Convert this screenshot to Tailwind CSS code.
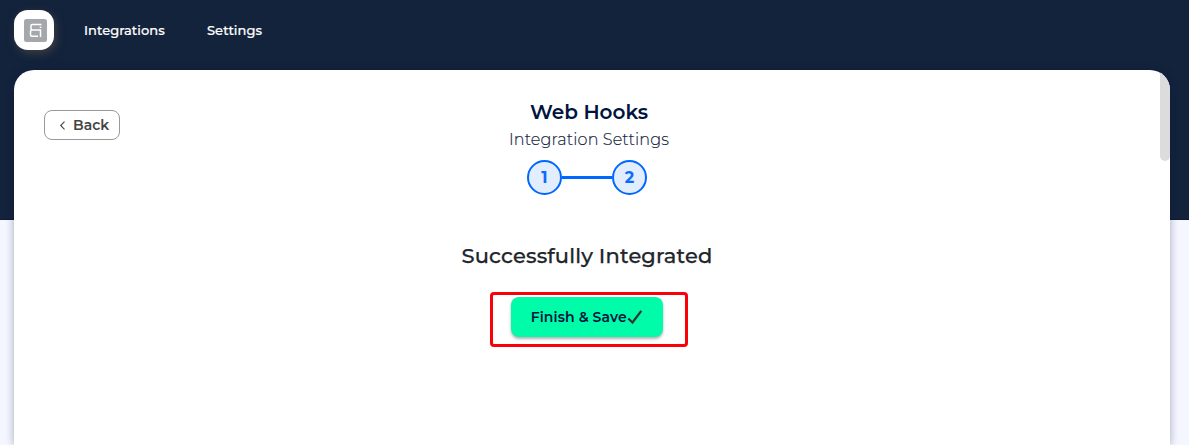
<!DOCTYPE html>
<html lang="en">
<head>
<meta charset="utf-8">
<title>Web Hooks</title>
<script src="https://cdn.jsdelivr.net/npm/@tailwindcss/browser@4"></script>
</head>
<body class="h-[445px] overflow-hidden bg-[linear-gradient(#13233c_0_219px,#101936_219px_220px,#f4f7ff_220px)] font-['Montserrat','Inter',sans-serif]">
<header class="flex h-[70px] items-start px-3.5 pt-2.5">
  <a class="flex size-10 items-center justify-center rounded-[14px] bg-white shadow-[2px_3px_8px_rgba(90,82,70,0.6)]">
    <svg class="ml-[3px] mt-px size-[23px]" viewBox="0 0 23 23" fill="none">
      <rect width="23" height="23" rx="2.5" fill="#a5a8ab"/>
      <path d="M17.500 5.500H8.200Q7 5.500 7 6.600V9.800Q7 11 8.200 11H16.500V18M8.200 11Q6.500 11 6.500 12.500V15.700Q6.500 17.200 8 17.200H14M15.700 8.300H17.300" stroke="#fff" stroke-width="1.500"/>
    </svg>
  </a>
  <nav class="ml-[30px] flex h-[41px] items-center gap-[42px] text-[13px] font-medium text-white [-webkit-text-stroke:0.2px]">
    <a class="w-[81px] whitespace-nowrap tracking-[0.05px]">Integrations</a>
    <a class="whitespace-nowrap tracking-[0.05px]">Settings</a>
  </nav>
</header>
<main class="ml-3.5 flex h-[375px] w-[1156px] overflow-hidden rounded-t-[20px] bg-white shadow-[0_0_8px_rgba(16,16,60,0.35)]">
  <div class="w-[120px] shrink-0 pl-[30px] pt-10">
    <button class="flex h-[30px] w-[76px] items-center rounded-lg border border-[#999] pl-[14px] text-sm font-semibold text-[#444]">
      <svg class="mr-[7px] h-[9px] w-[7px]" viewBox="0 0 7 9" fill="none" stroke="#444" stroke-width="1.100"><path d="M5.500 .7L1.700 4.500L5.500 8.300"/></svg>
      <span>Back</span>
    </button>
  </div>
  <section class="flex w-[910px] flex-col items-center pt-[29px]">
    <h1 class="h-[26px] whitespace-nowrap text-xl leading-[26px] font-semibold text-[#00143e]">Web Hooks</h1>
    <p class="h-7 whitespace-nowrap text-base leading-[30px] font-light tracking-[0.12px] text-[#14233e] [-webkit-text-stroke:0.15px]">Integration Settings</p>
    <div class="mr-1 mt-[7px] flex items-center text-base font-bold text-[#0a6cff]">
      <span class="flex size-[35px] items-center justify-center rounded-full border-2 border-[#0068ff] bg-[#e2edfd]">1</span>
      <span class="h-[3px] w-[50px] bg-[#0068ff]"></span>
      <span class="flex size-[35px] items-center justify-center rounded-full border-2 border-[#0068ff] bg-[#e2edfd]">2</span>
    </div>
    <h2 class="mr-1 mt-[47px] h-7 whitespace-nowrap text-[21px] leading-7 font-medium tracking-[0.14px] text-[#222529] [-webkit-text-stroke:0.25px]">Successfully Integrated</h2>
    <div class="mt-[22px] flex h-[55px] w-[198px] justify-center rounded-sm border-3 border-[#fa0008] pr-[2px] pt-[2px]">
      <button class="ml-[-2px] flex h-10 w-[152px] items-center rounded-lg bg-[#00fca8] pl-[19.5px] text-sm font-semibold text-[#00143e] shadow-[0_2px_3px_rgba(0,0,0,0.3)]">
        <span class="w-[96.5px] whitespace-nowrap tracking-[0.1px]">Finish &amp; Save</span>
        <svg class="h-[14px] w-[16px]" viewBox="0 0 16 14" fill="none" stroke="#333" stroke-width="2.200"><path d="M1.300 8.500L5.500 12.500L14.300 .8"/></svg>
      </button>
    </div>
  </section>
  <div class="ml-auto h-[91px] w-2.5 rounded-b-[5px] bg-[#dcdcdc]"></div>
</main>
</body>
</html>
